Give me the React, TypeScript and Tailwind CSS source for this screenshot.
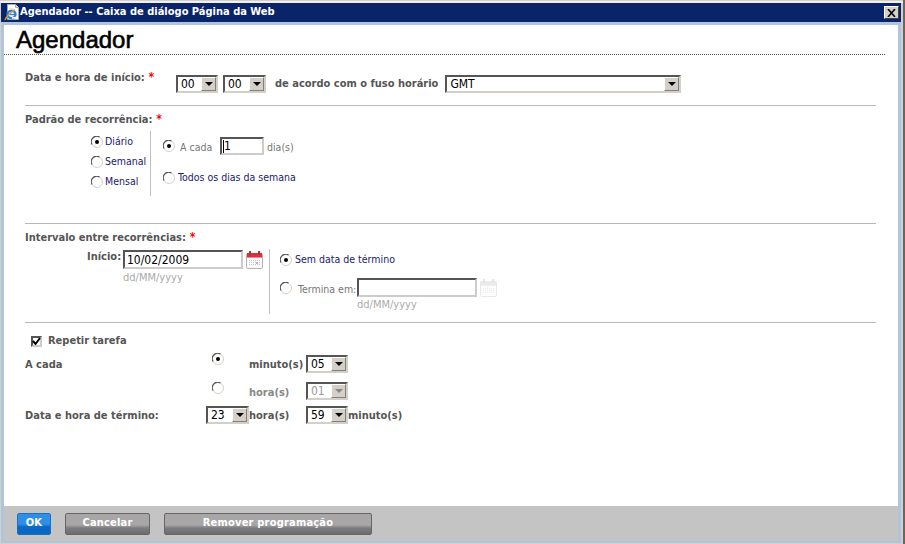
import React from 'react';

const font = 'font-["DejaVu_Sans_Condensed","DejaVu_Sans",sans-serif]';

function Caret({ disabled }: { disabled?: boolean }) {
  return (
    <span className="w-[15px] h-[14px] bg-[#d4d0c8] border border-t-white border-l-white border-r-[#808080] border-b-[#808080] flex items-center justify-center shrink-0">
      <span className={`w-0 h-0 border-x-[4px] border-x-transparent border-t-[4px] ${disabled ? 'border-t-[#888]' : 'border-t-black'}`} />
    </span>
  );
}

function Select({ value, w, disabled }: { value: string; w: string; disabled?: boolean }) {
  return (
    <div className={`${w} h-[18px] flex justify-between bg-white border-2 border-t-[#555] border-l-[#555] border-r-[#d4d0c8] border-b-[#d4d0c8] shrink-0 font-normal`}>
      <span className={`pl-[3px] text-[12px] leading-[15px] ${disabled ? 'text-[#999]' : 'text-black'}`}>{value}</span>
      <Caret disabled={disabled} />
    </div>
  );
}

function Radio({ on }: { on?: boolean }) {
  return (
    <svg width="12" height="12" viewBox="0 0 12 12" className="shrink-0">
      <circle cx="6" cy="6" r="5.5" fill="#fff" stroke="#d4d0c8" />
      <path d="M1 8.5A5.5 5.5 0 0 1 8.5 1" fill="none" stroke="#555" strokeWidth="1.2" />
      {on && <circle cx="6" cy="6" r="2" fill="#000" />}
    </svg>
  );
}

function Calendar({ faded }: { faded?: boolean }) {
  return (
    <svg width="17" height="18" viewBox="0 0 17 18" className={`shrink-0 block ${faded ? 'opacity-30' : ''}`}>
      <rect x="0.5" y="2.5" width="16" height="15" rx="1" fill="#fafafa" stroke="#b4b4b4" />
      <rect x="1" y="2" width="15" height="4" fill={faded ? '#bbb' : '#d8323c'} />
      <rect x="1" y="6" width="15" height="1" fill={faded ? '#ccc' : '#e98a8f'} />
      <rect x="3" y="0" width="2" height="4" fill={faded ? '#aaa' : '#b03038'} />
      <rect x="12" y="0" width="2" height="4" fill={faded ? '#aaa' : '#b03038'} />
      <path d="M3 9.5h11M3 11.5h11M3 13.5h11" stroke="#c4c4d4" strokeDasharray="1 1" />
      <rect x="10" y="11" width="2" height="2" fill={faded ? '#ddd' : '#e0a0c0'} />
    </svg>
  );
}

function Req() {
  return <span className="text-[#ff0000] text-[12px]"> *</span>;
}

function Hr() {
  return <div className="h-px bg-[#b8b8b8] ml-[21px] mr-[22px]" />;
}

function Btn({ children, w, blue }: { children: string; w: string; blue?: boolean }) {
  return (
    <button
      className={`${w} h-[22px] rounded-[2px] text-[11px] font-bold text-white tracking-[0.2px] ${
        blue
          ? 'bg-[linear-gradient(#2f8fe6_0%,#2f8fe6_50%,#0a68c4_65%,#0a68c4_100%)] border border-[#1e6fc0]'
          : 'bg-[linear-gradient(#a8a6a6_0%,#a8a6a6_55%,#7d7d80_70%,#6c6c70_100%)] border border-[#666]'
      }`}
    >
      {children}
    </button>
  );
}

export default function App() {
  return (
    <div className={`${font} w-[905px] h-[544px] bg-[#d4d0c8] flex flex-col overflow-hidden pt-[1px] border-r-2 border-[#666]`}>
      <div className="h-[2px] bg-[#f0f0f0]" />
      {/* title bar */}
      <div className="h-[19px] bg-[#0a246a] mr-[2px] ml-px flex items-center pl-[3px] pr-[2px] shrink-0">
        <svg width="16" height="17" viewBox="0 0 16 17" className="shrink-0">
          <path d="M3.5 0.5h8l3 3v12h-11z" fill="#fff" stroke="#a8a8a8" />
          <path d="M11.5 0.5v3h3" fill="#e8e8e8" stroke="#a8a8a8" />
          <path d="M5 5h5M5 7h7" stroke="#d0d0d0" />
          <ellipse cx="7.5" cy="10.5" rx="4" ry="3.6" fill="none" stroke="#2a7fdc" strokeWidth="2.4" />
          <path d="M3.5 10.5h8" stroke="#2a7fdc" strokeWidth="1.4" />
          <path d="M8 14l4-0.5" stroke="#fff" strokeWidth="1.5" />
          <path d="M1 16c1-3 6-8 10-10.500" fill="none" stroke="#e0a020" strokeWidth="1.4" />
        </svg>
        <span className="text-white font-bold text-[11px] flex-1">Agendador -- Caixa de diálogo Página da Web</span>
        <div className="w-[15px] h-[13px] bg-[#d4d0c8] border border-t-white border-l-white border-r-[#404040] border-b-[#404040] flex items-center justify-center">
          <svg width="9" height="8" viewBox="0 0 9 8"><path d="M1 0l7 8M8 0l-7 8" stroke="#000" strokeWidth="1.6" /></svg>
        </div>
      </div>
      {/* dialog frame */}
      <div className="flex-1 flex flex-col ml-px mr-[2px] border-x-[3px] border-b-[2px] border-t-[3px] border-[#b0c4de] mb-px min-h-0">
        <div className="flex-1 bg-white text-[10.5px] text-[#555] min-h-0">
          <div className="h-[30px] pl-[12px] border-b border-dotted border-[#555] mr-[13px] font-['Liberation_Sans',sans-serif] text-[24px] leading-[30px] text-black [-webkit-text-stroke:0.6px_black]">
            Agendador
          </div>

          {/* start */}
          <div className="h-[50px] flex pl-[21px]">
            <div className="w-[151px] pt-[13px] font-bold text-[11px]">Data e hora de início:<Req /></div>
            <div className="flex items-start pt-[20px] gap-[5px]">
              <Select value="00" w="w-[42px]" />
              <Select value="00" w="w-[43px]" />
              <span className="ml-[4px] mt-px font-bold text-[11px] mr-[2px]">de acordo com o fuso horário</span>
              <Select value="GMT" w="w-[236px]" />
            </div>
          </div>
          <Hr />

          {/* recurrence */}
          <div className="pl-[21px] h-[117px]">
            <div className="pt-[4px] h-[25px] font-bold text-[11px]">Padrão de recorrência:<Req /></div>
            <div className="flex pl-[66px]">
              <div className="w-[59px] h-[65px] flex flex-col gap-[8px] text-[#1a1a6c] pt-[5px]">
                <label className="flex items-center gap-[2px] h-[12px]"><Radio on />Diário</label>
                <label className="flex items-center gap-[2px] h-[12px]"><Radio />Semanal</label>
                <label className="flex items-center gap-[2px] h-[12px]"><Radio />Mensal</label>
              </div>
              <div className="border-l border-[#c0c0c0] h-[65px] pl-[12px] flex flex-col gap-[16px] pt-[6px]">
                <div className="flex items-center h-[18px] text-[#777]">
                  <Radio on />
                  <span className="w-[45px] pl-[5px] pt-[3px]">A cada</span>
                  <div className="w-[44px] h-[18px] border-2 border-t-[#555] border-l-[#555] border-r-[#ccc] border-b-[#ccc] text-[12px] leading-[14px] text-black pl-px flex items-center">
                    <span className="w-px h-[13px] bg-black" />1
                  </div>
                  <span className="ml-[3px] pt-[3px]">dia(s)</span>
                </div>
                <label className="flex items-center gap-[3px] h-[14px] text-[#1a1a6c]"><Radio />Todos os dias da semana</label>
              </div>
            </div>
          </div>
          <Hr />

          {/* interval */}
          <div className="pl-[21px] h-[98px]">
            <div className="pt-[4px] h-[26px] font-bold text-[11px]">Intervalo entre recorrências:<Req /></div>
            <div className="flex">
              <div className="w-[244px] flex flex-col">
                <div className="flex pl-[62px] h-[20px] items-start">
                  <span className="font-bold text-[11px] w-[36px] -mt-px">Início:</span>
                  <div className="w-[120px] h-[19px] border-2 border-t-[#555] border-l-[#555] border-r-[#ccc] border-b-[#ccc] text-[12px] leading-[17px] text-black pl-[2px]">10/02/2009</div>
                  <span className="ml-[3px] mt-px"><Calendar /></span>
                </div>
                <div className="pl-[98px] text-[11px] text-[#aaa]">dd/MM/yyyy</div>
              </div>
              <div className="border-l border-[#c0c0c0] h-[65px] -mt-px pl-[10px] pt-[4px]">
                <label className="flex items-center gap-[3px] h-[14px] text-[#1a1a6c]"><Radio on />Sem data de término</label>
                <div className="flex items-center h-[19px] mt-[11px] text-[#777]">
                  <Radio />
                  <span className="w-[65px] pl-[6px] pt-[4px] whitespace-nowrap">Termina em:</span>
                  <div className="w-[120px] h-[19px] border-2 border-t-[#555] border-l-[#555] border-r-[#ccc] border-b-[#ccc] bg-white" />
                  <span className="ml-[3px]"><Calendar faded /></span>
                </div>
                <div className="pl-[77px] text-[11px] text-[#aaa]">dd/MM/yyyy</div>
              </div>
            </div>
          </div>
          <Hr />

          {/* repeat */}
          <div className="pl-[21px] font-bold text-[11px]">
            <div className="flex items-center h-[20px] mt-[8px] pl-[6px]">
              <span className="w-[11px] h-[11px] bg-white border-2 border-t-[#555] border-l-[#555] border-r-[#ccc] border-b-[#ccc] flex items-center justify-center mr-[6px]">
                <svg width="9" height="9" viewBox="0 0 9 9" className="shrink-0"><path d="M1 4l2.5 3L8 1" fill="none" stroke="#000" strokeWidth="2" /></svg>
              </span>
              Repetir tarefa
            </div>
            <div className="flex items-center h-[18px] mt-[4px]">
              <span className="w-[187px] pt-[2px]">A cada</span>
              <span className="w-[37px] -mt-[10px]"><Radio on /></span>
              <span className="w-[57px] pt-[2px]">minuto(s)</span>
              <Select value="05" w="w-[42px]" />
            </div>
            <div className="flex items-center h-[18px] mt-[9px]">
              <span className="w-[187px]" />
              <span className="w-[37px] -mt-[6px]"><Radio /></span>
              <span className="w-[57px] pt-[4px] text-[#888]">hora(s)</span>
              <Select value="01" w="w-[42px]" disabled />
            </div>
            <div className="flex items-center h-[18px] mt-[6px]">
              <span className="w-[181px] pt-[2px]">Data e hora de término:</span>
              <Select value="23" w="w-[43px]" />
              <span className="w-[57px] pt-[2px]">hora(s)</span>
              <Select value="59" w="w-[42px]" />
              <span className="pt-[2px]">minuto(s)</span>
            </div>
          </div>
        </div>
        {/* footer */}
        <div className="h-[35px] bg-[#c4c4c4] flex items-center pl-[13px] gap-[14px] shrink-0">
          <Btn w="w-[34px]" blue>OK</Btn>
          <Btn w="w-[85px]">Cancelar</Btn>
          <Btn w="w-[208px]">Remover programação</Btn>
        </div>
      </div>
    </div>
  );
}
